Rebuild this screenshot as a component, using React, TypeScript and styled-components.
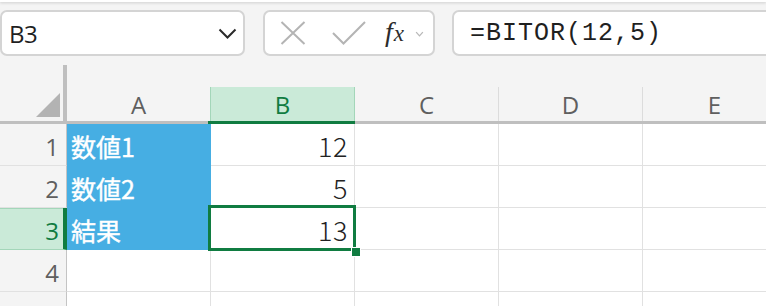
import * as React from "react";
import styled, { createGlobalStyle, css } from "styled-components";

const GREEN = "#107c41";
const GREEN_BG = "#caead8";
const BLUE = "#46aee3";
const GRID = "#e1e1e1";
const HEAD_LINE = "#bfbfbf";

const GlobalStyle = createGlobalStyle`
  html, body {
    margin: 0;
    padding: 0;
    background: #f4f4f4;
    overflow: hidden;
  }
  body {
    font-family: "Open Sans", "Noto Sans", sans-serif;
  }
`;

const Page = styled.div`
  width: 766px;
  height: 306px;
  overflow: hidden;
  background: #f4f4f4;
`;

const TopStrip = styled.div`
  height: 2px;
  background: #ffffff;
  box-shadow: 0 1px 3px rgba(0, 0, 0, 0.18);
`;

const Toolbar = styled.div`
  display: flex;
  margin-top: 8px;
  height: 46px;
`;

const Field = styled.div<{ width: number; gap?: number }>`
  box-sizing: border-box;
  flex: 0 0 ${(p) => p.width}px;
  margin-left: ${(p) => p.gap || 0}px;
  height: 46px;
  background: #ffffff;
  border: 2px solid #d4d4d4;
  border-radius: 7px;
  display: flex;
  align-items: center;
`;

const NameText = styled.span`
  flex: 1;
  padding-left: 7px;
  font-family: "Open Sans", sans-serif;
  font-size: 24px;
  color: #1f1f1f;
  letter-spacing: -0.5px;
`;

const IconSlot = styled.span<{ left: number }>`
  display: flex;
  margin-left: ${(p) => p.left}px;
`;

const FxLabel = styled.span`
  margin-left: 19px;
  font-family: "Liberation Serif", serif;
  font-style: italic;
  color: #2b2b2b;
  font-size: 28px;
  line-height: 1;
  position: relative;
  top: -1px;

  small {
    font-size: 23px;
    margin-left: 1px;
  }
`;

const FormulaText = styled.span`
  padding-left: 16px;
  font-family: "Liberation Mono", "DejaVu Sans Mono", monospace;
  font-size: 25px;
  letter-spacing: 1px;
  color: #1f1f1f;
  white-space: nowrap;
`;

const Sheet = styled.div`
  display: grid;
  grid-template-columns: 67px repeat(5, 144px);
  grid-template-rows: 59px repeat(5, 42px);
  margin-top: 9px;
`;

const Corner = styled.div`
  box-sizing: border-box;
  border-right: 4px solid ${HEAD_LINE};
  border-bottom: 3px solid ${HEAD_LINE};
  display: flex;
  align-items: flex-end;
  justify-content: flex-end;
  padding: 0 3px 4px 0;
`;

const ColHead = styled.div<{ active?: boolean }>`
  position: relative;
  box-sizing: border-box;
  border-bottom: 3px solid ${HEAD_LINE};
  display: flex;
  align-items: flex-end;

  ${(p) =>
    p.active &&
    css`
      &::after {
        content: "";
        position: absolute;
        left: -3px;
        right: -2px;
        bottom: -4px;
        height: 4px;
        background: ${GREEN};
      }
    `}
`;

const ColLabel = styled.div<{ active?: boolean }>`
  box-sizing: border-box;
  width: 100%;
  height: 34px;
  display: flex;
  align-items: center;
  justify-content: center;
  font-family: "Open Sans", sans-serif;
  font-size: 24px;
  color: ${(p) => (p.active ? GREEN : "#5f5f5f")};
  border-right: 1px solid ${(p) => (p.active ? "#a3d6b9" : "#dcdcdc")};
  background: ${(p) => (p.active ? GREEN_BG : "transparent")};
  ${(p) => p.active && `border-left: 1px solid #a3d6b9; margin-left: -1px; width: calc(100% + 1px);`}
`;

const RowHead = styled.div<{ active?: boolean }>`
  box-sizing: border-box;
  display: flex;
  align-items: center;
  justify-content: flex-end;
  padding: 3px 7px 0 0;
  font-family: "Open Sans", sans-serif;
  font-size: 24px;
  color: ${(p) => (p.active ? GREEN : "#5f5f5f")};
  background: ${(p) => (p.active ? GREEN_BG : "#f4f4f4")};
  border-right: ${(p) => (p.active ? `4px solid ${GREEN}` : "1px solid #c4c4c4")};
  border-bottom: 1px solid ${(p) => (p.active ? "#a3d6b9" : GRID)};
  ${(p) => p.active && `box-shadow: inset 0 1px 0 #a3d6b9; padding-right: 4px;`}
`;

const Cell = styled.div<{ fill?: string; align?: "left" | "right"; selected?: boolean }>`
  position: relative;
  box-sizing: border-box;
  background: ${(p) => p.fill || "#ffffff"};
  border-right: 1px solid ${(p) => p.fill || GRID};
  border-bottom: 1px solid ${(p) => p.fill || GRID};
  display: flex;
  align-items: center;
  justify-content: ${(p) => (p.align === "right" ? "flex-end" : "flex-start")};
  padding: 2px 6px 0 4px;
  font-family: "Noto Sans CJK JP", "Noto Sans", sans-serif;
  font-size: 25px;
  color: ${(p) => (p.fill ? "#ffffff" : "#1a1a1a")};
  -webkit-text-stroke: ${(p) => (p.fill ? "0.4px #ffffff" : "0")};
  white-space: nowrap;

  ${(p) =>
    p.selected &&
    css`
      &::before {
        content: "";
        position: absolute;
        left: -3px;
        top: -3px;
        right: -2px;
        bottom: -2px;
        border: 3px solid ${GREEN};
        z-index: 2;
      }
      &::after {
        content: "";
        position: absolute;
        right: -6px;
        bottom: -7px;
        width: 8px;
        height: 8px;
        background: ${GREEN};
        outline: 1px solid #ffffff;
        z-index: 3;
      }
    `}
`;

const Num = styled.span`
  font-family: "Noto Sans CJK JP", "Noto Sans", sans-serif;
  font-weight: 300;
  font-size: 27px;
  letter-spacing: 0.5px;
  color: #222222;
`;

const Chevron = ({ color, w, h, sw }: { color: string; w: number; h: number; sw: number }) => (
  <svg width={w} height={h} viewBox={`0 0 ${w} ${h}`}>
    <polyline
      points={`${sw / 2 + 0.5},${sw / 2 + 0.5} ${w / 2},${h - sw / 2 - 0.5} ${w - sw / 2 - 0.5},${sw / 2 + 0.5}`}
      fill="none"
      stroke={color}
      strokeWidth={sw}
    />
  </svg>
);

const CornerTriangle = () => (
  <svg width="24" height="24" viewBox="0 0 24 24">
    <polygon points="24,0 24,24 0,24" fill="#b3b3b3" />
  </svg>
);

const columns = ["A", "B", "C", "D", "E"];

type CellData = { text?: string; num?: boolean; fill?: string };

const rows: CellData[][] = [
  [{ text: "数値1", fill: BLUE }, { text: "12", num: true }],
  [{ text: "数値2", fill: BLUE }, { text: "5", num: true }],
  [{ text: "結果", fill: BLUE }, { text: "13", num: true }],
  [],
  [],
];

export default function App() {
  return (
    <Page>
      <GlobalStyle />
      <TopStrip />
      <Toolbar>
        <Field width={245}>
          <NameText>B3</NameText>
          <IconSlot left={0} style={{ marginRight: 6 }}>
            <Chevron color="#2a2a2a" w={19} h={11} sw={2} />
          </IconSlot>
        </Field>
        <Field width={172} gap={18}>
          <IconSlot left={15}>
            <svg width="26" height="24" viewBox="0 0 26 24">
              <path d="M1.5 1 L24.5 23 M24.5 1 L1.5 23" stroke="#b4b4b4" strokeWidth="2" fill="none" />
            </svg>
          </IconSlot>
          <IconSlot left={26}>
            <svg width="34" height="24" viewBox="0 0 34 24">
              <polyline points="1,12 11.5,22.5 33,1" stroke="#b4b4b4" strokeWidth="2" fill="none" />
            </svg>
          </IconSlot>
          <FxLabel>
            f<small>x</small>
          </FxLabel>
          <IconSlot left={11} style={{ marginTop: 2 }}>
            <Chevron color="#b8b8b8" w={9} h={6} sw={1.3} />
          </IconSlot>
        </Field>
        <Field width={400} gap={17}>
          <FormulaText>=BITOR(12,5)</FormulaText>
        </Field>
      </Toolbar>

      <Sheet>
        <Corner>
          <CornerTriangle />
        </Corner>
        {columns.map((c) => (
          <ColHead key={c} active={c === "B"}>
            <ColLabel active={c === "B"}>{c}</ColLabel>
          </ColHead>
        ))}
        {rows.map((row, r) => (
          <React.Fragment key={r}>
            <RowHead active={r === 2}>{r + 1}</RowHead>
            {columns.map((c, ci) => {
              const d = row[ci] || {};
              return (
                <Cell
                  key={c}
                  fill={d.fill}
                  align={d.num ? "right" : "left"}
                  selected={r === 2 && c === "B"}
                >
                  {d.num ? <Num>{d.text}</Num> : d.text}
                </Cell>
              );
            })}
          </React.Fragment>
        ))}
      </Sheet>
    </Page>
  );
}
